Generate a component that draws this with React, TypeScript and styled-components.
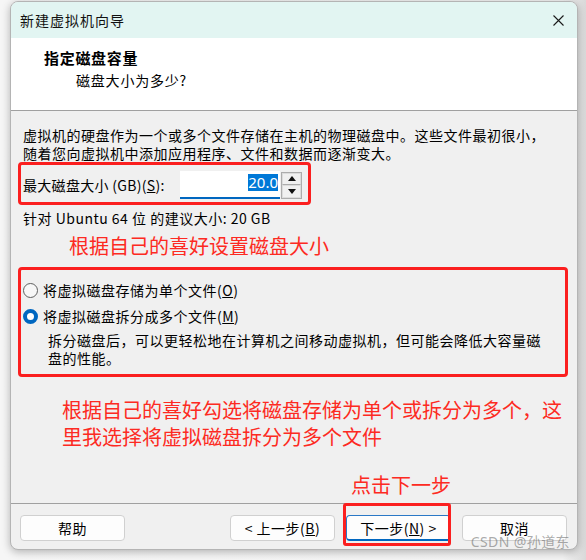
import React from 'react';
import styled, { createGlobalStyle } from 'styled-components';

const Global = createGlobalStyle`
  html, body { margin: 0; padding: 0; }
  body {
    width: 586px;
    height: 560px;
    overflow: hidden;
    background: #ececec;
    font-family: "Noto Sans CJK SC", "Noto Sans", sans-serif;
    color: #000;
  }
`;

const Page = styled.div`
  box-sizing: border-box;
  height: 560px;
  padding: 1px 0 0 10px;
  background: linear-gradient(90deg, #f6f6f6 0%, #f3f3f3 96%, #d9d9d9 100%);
`;

const Window = styled.div`
  position: relative;
  box-sizing: border-box;
  width: 568px;
  height: 549px;
  border: 1px solid #b4b4b4;
  border-radius: 8px;
  overflow: hidden;
  background: #f0f0f0;
  display: flex;
  flex-direction: column;
  box-shadow: 0 2px 9px rgba(0, 0, 0, 0.28);
`;

const TitleBar = styled.div`
  flex: none;
  height: 36px;
  background: #e2f5f2;
  display: flex;
  align-items: center;
  justify-content: space-between;
  padding: 0 13px 0 9px;
`;

const TitleText = styled.div`
  font-size: 14px;
  line-height: 20px;
  letter-spacing: 1px;
  color: #111;
`;

const CloseIcon = styled.svg`
  width: 11px;
  height: 11px;
  display: block;
`;

const Header = styled.div`
  flex: none;
  height: 62px;
  background: #fff;
  border-bottom: 1px solid #a0a0a0;
  padding: 10px 0 0 33px;
`;

const HeaderTitle = styled.div`
  font-size: 15px;
  font-weight: 700;
  line-height: 20px;
  letter-spacing: 0.7px;
`;

const HeaderSub = styled.div`
  margin: 2px 0 0 32px;
  font-size: 14px;
  line-height: 20px;
  letter-spacing: 0.8px;
`;

const Body = styled.div`
  flex: 1;
  padding: 15px 0 0 7px;
  font-size: 14px;
  letter-spacing: 0.5px;
`;

const Para = styled.div`
  margin-left: 5px;
  line-height: 18px;
  white-space: nowrap;
`;

const RedBox = styled.div<{ $w: number }>`
  box-sizing: border-box;
  width: ${(p) => p.$w}px;
  border: 3px solid #fb1f1f;
  border-radius: 4px;
`;

const SizeRow = styled(RedBox)`
  display: flex;
  align-items: center;
  padding: 6px 0 3px 2px;
`;

const SizeLabel = styled.div`
  width: 157px;
  flex: none;
  line-height: 18px;
  letter-spacing: 0.3px;
  white-space: nowrap;
`;

const NumberInput = styled.div`
  box-sizing: border-box;
  width: 100px;
  height: 28px;
  background: #fff;
  border-bottom: 2px solid #0067c0;
  text-align: right;
  padding: 1px 2px 0 0;
`;

const Selected = styled.span`
  display: inline-block;
  background: #0078d7;
  color: #fff;
  font-family: "Noto Sans", sans-serif;
  font-size: 15px;
  line-height: 17px;
  letter-spacing: 0;
`;

const Spinner = styled.div`
  box-sizing: border-box;
  margin-left: 1px;
  width: 21px;
  height: 27px;
  border: 1px solid #acacac;
  display: flex;
  flex-direction: column;
  background: #f0f0f0;
`;

const SpinButton = styled.div<{ $top?: boolean }>`
  flex: 1;
  display: flex;
  align-items: center;
  justify-content: center;
  border: 1px solid #dcdcdc;
  ${(p) => (p.$top ? 'border-bottom-color: #acacac;' : '')}
`;

const Triangle = styled.svg`
  width: 8px;
  height: 5px;
  display: block;
`;

const Recommend = styled.div`
  margin: 4px 0 0 5px;
  line-height: 18px;
`;

const Annotation = styled.div<{ $ml: number; $mt: number; $lh: number }>`
  margin: ${(p) => p.$mt}px 0 0 ${(p) => p.$ml}px;
  color: #fd2a22;
  font-size: 20px;
  line-height: ${(p) => p.$lh}px;
  letter-spacing: 0;
  white-space: nowrap;
`;

const OptionsBox = styled(RedBox)`
  margin-top: 8px;
  padding: 10px 0 7px 2px;
`;

const RadioRow = styled.div<{ $gap?: number }>`
  display: flex;
  align-items: center;
  height: 20px;
  gap: 5px;
  margin-top: ${(p) => p.$gap ?? 0}px;
  line-height: 20px;
`;

const Radio = styled.span<{ $checked?: boolean }>`
  box-sizing: border-box;
  width: 15px;
  height: 15px;
  border-radius: 50%;
  flex: none;
  display: flex;
  align-items: center;
  justify-content: center;
  border: ${(p) => (p.$checked ? '4.5px solid #0067c0' : '1px solid #5f5f5f')};
  background: ${(p) => (p.$checked ? '#fff' : '#f7f7f7')};
`;

const Desc = styled.div`
  margin: 5px 0 0 25px;
  line-height: 18px;
  white-space: nowrap;
`;

const Footer = styled.div`
  flex: none;
  box-sizing: border-box;
  height: 46px;
  border-top: 1px solid #a0a0a0;
  padding: 11px 10px 0 9px;
  display: flex;
  justify-content: space-between;
`;

const ButtonGroup = styled.div`
  display: flex;
  gap: 11px;
`;

const Button = styled.div<{ $primary?: boolean }>`
  position: relative;
  box-sizing: border-box;
  width: 105px;
  height: 26px;
  background: #fdfdfd;
  border: 1px solid ${(p) => (p.$primary ? '#2a78c6' : '#d0d0d0')};
  ${(p) => (p.$primary ? 'border-bottom: 2px solid #0067c0;' : '')}
  border-radius: 4px;
  display: flex;
  align-items: center;
  justify-content: center;
  font-size: 14px;
  letter-spacing: 0.5px;
  line-height: 20px;
  white-space: nowrap;
`;

const Highlight = styled.div`
  position: absolute;
  top: -13px;
  bottom: -7px;
  left: -4px;
  right: -1px;
  border: 3px solid #fb1f1f;
  border-radius: 3px;
  pointer-events: none;
`;

const Watermark = styled.div`
  position: absolute;
  right: 7px;
  bottom: -2px;
  font-family: "Noto Sans", "Noto Sans CJK SC", sans-serif;
  font-size: 14px;
  line-height: 18px;
  letter-spacing: 0.4px;
  color: rgba(100, 100, 100, 0.55);
  white-space: nowrap;
`;

export default function App() {
  return (
    <>
      <Global />
      <Page>
        <Window>
          <TitleBar>
            <TitleText>新建虚拟机向导</TitleText>
            <CloseIcon viewBox="0 0 11 11">
              <path d="M0.5 0.5 L10.5 10.5 M10.5 0.5 L0.5 10.5" stroke="#1a1a1a" strokeWidth="1.1" fill="none" />
            </CloseIcon>
          </TitleBar>
          <Header>
            <HeaderTitle>指定磁盘容量</HeaderTitle>
            <HeaderSub>磁盘大小为多少?</HeaderSub>
          </Header>
          <Body>
            <Para>
              虚拟机的硬盘作为一个或多个文件存储在主机的物理磁盘中。这些文件最初很小，
              <br />
              随着您向虚拟机中添加应用程序、文件和数据而逐渐变大。
            </Para>
            <SizeRow $w={293}>
              <SizeLabel>
                最大磁盘大小 (GB)(<u>S</u>):
              </SizeLabel>
              <NumberInput>
                <Selected>20.0</Selected>
              </NumberInput>
              <Spinner>
                <SpinButton $top>
                  <Triangle viewBox="0 0 8 5">
                    <path d="M4 0 L8 5 L0 5 Z" fill="#111" />
                  </Triangle>
                </SpinButton>
                <SpinButton>
                  <Triangle viewBox="0 0 8 5">
                    <path d="M0 0 L8 0 L4 5 Z" fill="#111" />
                  </Triangle>
                </SpinButton>
              </Spinner>
            </SizeRow>
            <Recommend>针对 Ubuntu 64 位 的建议大小: 20 GB</Recommend>
            <Annotation $ml={51} $mt={6} $lh={26}>
              根据自己的喜好设置磁盘大小
            </Annotation>
            <OptionsBox $w={550}>
              <RadioRow>
                <Radio />
                <span>
                  将虚拟磁盘存储为单个文件(<u>O</u>)
                </span>
              </RadioRow>
              <RadioRow $gap={6}>
                <Radio $checked />
                <span>
                  将虚拟磁盘拆分成多个文件(<u>M</u>)
                </span>
              </RadioRow>
              <Desc>
                拆分磁盘后，可以更轻松地在计算机之间移动虚拟机，但可能会降低大容量磁
                <br />
                盘的性能。
              </Desc>
            </OptionsBox>
            <Annotation $ml={44} $mt={19} $lh={27}>
              根据自己的喜好勾选将磁盘存储为单个或拆分为多个，这
              <br />
              里我选择将虚拟磁盘拆分为多个文件
            </Annotation>
            <Annotation $ml={333} $mt={22} $lh={26}>
              点击下一步
            </Annotation>
          </Body>
          <Footer>
            <Button>帮助</Button>
            <ButtonGroup>
              <Button>
                &lt; 上一步(<u>B</u>)
              </Button>
              <Button $primary>
                下一步(<u>N</u>) &gt;
                <Highlight />
              </Button>
              <Button>取消</Button>
            </ButtonGroup>
          </Footer>
          <Watermark>CSDN @孙道东</Watermark>
        </Window>
      </Page>
    </>
  );
}
